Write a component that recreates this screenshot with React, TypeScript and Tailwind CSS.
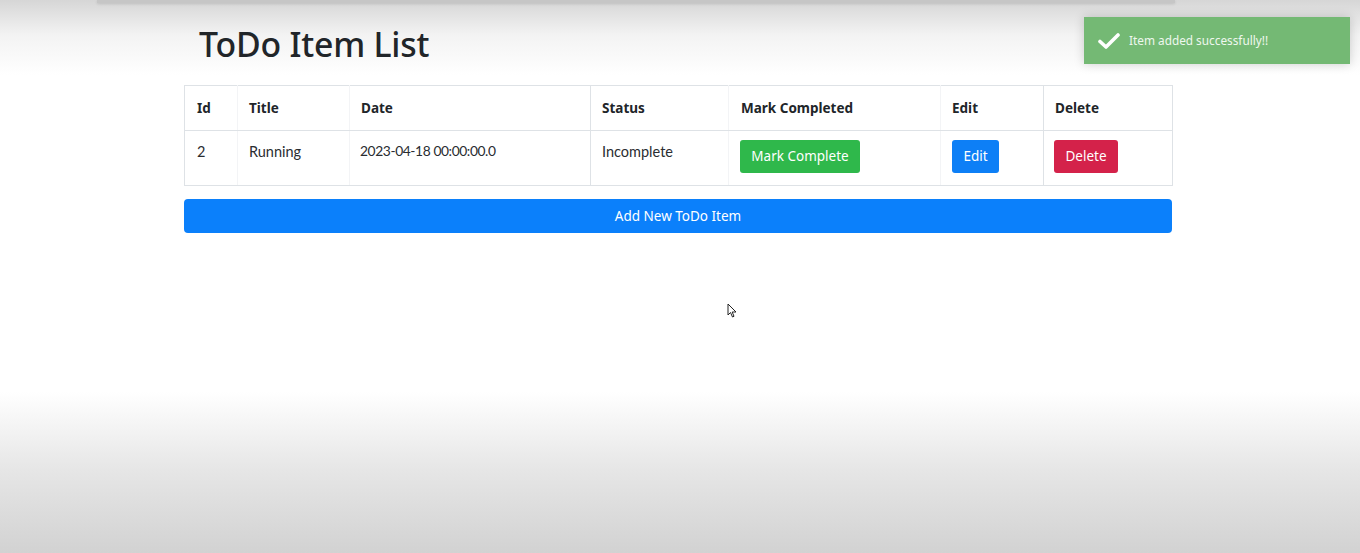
import React from "react";

const font = { fontFamily: '"Noto Sans", "Open Sans", sans-serif' };
const bodyFont = { fontFamily: 'Lato, "Noto Sans", sans-serif' };

const strong = "border-r-[#dee2e6]";
const faint = "border-r-[#f3f4f6]";

export default function App() {
  return (
    <div
      className="relative w-[1360px] h-[553px] overflow-hidden bg-[linear-gradient(to_bottom,#d6d6d6_0px,#f3f3f3_35px,#ffffff_75px,#ffffff_392px,#f6f6f6_420px,#e6e6e6_470px,#d2d2d2_553px)] text-[#212529]"
      style={font}
    >
      {/* top strip */}
      <div className="absolute left-[97px] top-0 w-[1078px] h-[3px] bg-[#c6c6c6] shadow-[0_1px_3px_rgba(0,0,0,0.12)]" />

      <div className="ml-[184px] w-[988px] pt-[22px]">
        <h1 className="pl-[15px] text-[33.8px] leading-[44px] font-medium tracking-[-0.2px] text-[#212529]">
          ToDo Item List
        </h1>

        <table className="mt-[19px] w-[988px] border-collapse table-fixed text-[13.5px]">
          <colgroup>
            <col className="w-[53px]" />
            <col className="w-[112px]" />
            <col className="w-[241px]" />
            <col className="w-[138px]" />
            <col className="w-[212px]" />
            <col className="w-[103px]" />
            <col className="w-[129px]" />
          </colgroup>
          <thead>
            <tr className="h-[45px] text-left">
              <th className={`border-y border-l border-r border-y-[#dee2e6] border-l-[#dee2e6] ${faint} px-[12px] font-bold`}>Id</th>
              <th className={`border-y border-r border-y-[#dee2e6] ${faint} px-[11px] font-bold`}>Title</th>
              <th className={`border-y border-r border-y-[#dee2e6] ${strong} px-[11px] font-bold`}>Date</th>
              <th className={`border-y border-r border-y-[#dee2e6] ${faint} px-[11px] font-bold`}>Status</th>
              <th className={`border-y border-r border-y-[#dee2e6] ${faint} px-[12px] font-bold`}>Mark Completed</th>
              <th className={`border-y border-r border-y-[#dee2e6] ${strong} px-[11px] font-bold`}>Edit</th>
              <th className={`border-y border-r border-y-[#dee2e6] ${strong} px-[11px] font-bold`}>Delete</th>
            </tr>
          </thead>
          <tbody>
            <tr className="h-[55px] align-top text-[14.5px] text-[#2a2d31]" style={bodyFont}>
              <td className={`border-y border-l border-r border-y-[#dee2e6] border-l-[#dee2e6] ${faint} px-[12px] pt-[10px]`}>2</td>
              <td className={`border-y border-r border-y-[#dee2e6] ${faint} px-[11px] pt-[10px]`}>Running</td>
              <td className={`border-y border-r border-y-[#dee2e6] ${strong} px-[10px] pt-[10px] text-[13.8px] tracking-[-0.4px]`}>
                2023-04-18 00:00:00.0
              </td>
              <td className={`border-y border-r border-y-[#dee2e6] ${faint} px-[11px] pt-[10px]`}>Incomplete</td>
              <td className={`border-y border-r border-y-[#dee2e6] ${faint} px-[11px] pt-[9px]`}>
                <button className="h-[33px] w-[120px] rounded-[3px] bg-[#2fb84b] text-white text-[13.5px]" style={font}>
                  Mark Complete
                </button>
              </td>
              <td className={`border-y border-r border-y-[#dee2e6] ${strong} px-[11px] pt-[9px]`}>
                <button className="h-[33px] w-[47px] rounded-[3px] bg-[#0d7ff6] text-white text-[13.5px]" style={font}>
                  Edit
                </button>
              </td>
              <td className={`border-y border-r border-y-[#dee2e6] ${strong} px-[10px] pt-[9px]`}>
                <button className="h-[33px] w-[64px] rounded-[3px] bg-[#d4224a] text-white text-[13.5px]" style={font}>
                  Delete
                </button>
              </td>
            </tr>
          </tbody>
        </table>

        <button className="mt-[13px] w-[988px] h-[34px] rounded-[4px] bg-[#0b80fb] text-white text-[13.5px]">
          Add New ToDo Item
        </button>
      </div>

      {/* toast */}
      <div className="absolute left-[1084px] top-[17px] w-[266px] h-[47px] bg-[#74b974] shadow-[0_0_10px_rgba(0,0,0,0.18)] flex items-center pl-[14px]">
        <svg width="22" height="18" viewBox="0 0 22 18" className="shrink-0">
          <path d="M2 9.5 L8 15 L20 3" fill="none" stroke="#ffffff" strokeWidth="3.6" strokeLinecap="round" strokeLinejoin="round" />
        </svg>
        <span className="ml-[9px] text-[11.8px] text-[#eef7ee]">Item added successfully!!</span>
      </div>

      {/* cursor */}
      <svg className="absolute left-[727px] top-[303px]" width="12" height="16" viewBox="0 0 12 16">
        <path d="M1 1 L1 12 L3.5 9.5 L5.5 14 L7 13.3 L5.2 9 L9 9 Z" fill="#ffffff" stroke="#222" strokeWidth="1" strokeLinejoin="round" />
      </svg>
    </div>
  );
}
